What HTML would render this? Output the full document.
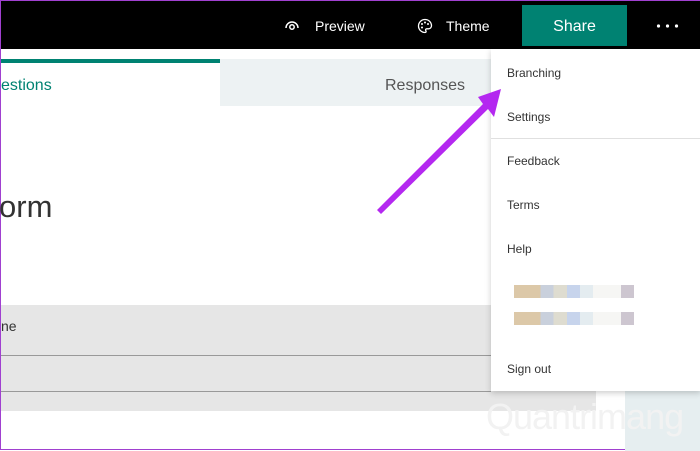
<!DOCTYPE html>
<html><head><meta charset="utf-8"><style>
*{margin:0;padding:0;box-sizing:border-box}
body{width:700px;height:450px;overflow:hidden;background:#fff;font-family:"Liberation Sans",sans-serif;position:relative;border:1px solid #a040d0}
.a{position:absolute}
.hdr{left:0;top:0;width:700px;height:48px;background:#000}
.ht{color:#fff;font-size:14px;top:17px}
.mi{font-size:12px;color:#333;left:506px}
</style></head><body>
<div class="a hdr"></div>
<svg class="a" style="left:283px;top:17px" width="16" height="14" viewBox="0 0 16 14"><path d="M2 10 A6 6 0 0 1 14 10" fill="none" stroke="#fff" stroke-width="1.5"/><circle cx="8" cy="9" r="2.2" fill="none" stroke="#fff" stroke-width="1.5"/></svg>
<div class="a ht" style="left:314px">Preview</div>
<svg class="a" style="left:416px;top:17px" width="16" height="16" viewBox="0 0 16 16"><path d="M8 1.5a6.5 6.5 0 1 0 0 13c1.2 0 1.4-1 .8-1.8-.6-.8-.1-1.9 1-1.9h1.7a3 3 0 0 0 3-3C14.5 4.2 11.6 1.5 8 1.5z" fill="none" stroke="#fff" stroke-width="1.3"/><circle cx="5" cy="6" r="1" fill="#fff"/><circle cx="8" cy="4.5" r="1" fill="#fff"/><circle cx="11" cy="6" r="1" fill="#fff"/><circle cx="5" cy="9.5" r="1" fill="#fff"/></svg>
<div class="a ht" style="left:445px">Theme</div>
<div class="a" style="left:521px;top:4px;width:105px;height:41px;background:#008272;color:#fff;font-size:16px;text-align:center;line-height:43px">Share</div>
<svg class="a" style="left:655px;top:22px" width="24" height="6"><circle cx="2.5" cy="3" r="1.6" fill="#fff"/><circle cx="11.5" cy="3" r="1.6" fill="#fff"/><circle cx="20.5" cy="3" r="1.6" fill="#fff"/></svg>

<div class="a" style="left:0;top:58px;width:490px;height:47px;background:#edf2f3"></div>
<div class="a" style="left:0;top:58px;width:219px;height:47px;background:#fff;border-top:4px solid #008272"></div>
<div class="a" style="left:0;top:76px;font-size:16px;color:#008272">estions</div>
<div class="a" style="left:384px;top:76px;font-size:16px;color:#555">Responses</div>
<div class="a" style="left:-2px;top:188px;font-size:31px;color:#333">orm</div>

<div class="a" style="left:0;top:304px;width:595px;height:106px;background:#e6e6e6"></div>
<div class="a" style="left:0;top:354px;width:490px;height:1px;background:#999"></div>
<div class="a" style="left:0;top:390px;width:490px;height:1px;background:#999"></div>
<div class="a" style="left:0;top:317px;font-size:14px;color:#333">ne</div>
<div class="a" style="left:624px;top:390px;width:76px;height:60px;background:#e6eef0"></div>
<div class="a" style="left:485px;top:395px;font-size:36px;color:#f2f2f2;letter-spacing:-1px">Quantrimang</div>

<div class="a" style="left:490px;top:48px;width:210px;height:342px;background:#fff;box-shadow:0 2px 6px rgba(0,0,0,.2)"></div>
<div class="a mi" style="top:65px">Branching</div>
<div class="a mi" style="top:109px">Settings</div>
<div class="a" style="left:490px;top:137px;width:210px;height:1px;background:#e0e0e0"></div>
<div class="a mi" style="top:153px">Feedback</div>
<div class="a mi" style="top:197px">Terms</div>
<div class="a mi" style="top:241px">Help</div>
<div class="a" style="left:513px;top:284px;width:120px;height:13px;background:linear-gradient(90deg,#dcc8a8 0 22%,#c9d0dc 22% 33%,#dedcd0 33% 44%,#c7d4ec 44% 55%,#e4ecf0 55% 66%,#f6f6f4 66% 89%,#cdc6d0 89%)"></div>
<div class="a" style="left:513px;top:311px;width:120px;height:13px;background:linear-gradient(90deg,#dcc8a8 0 22%,#c9d0dc 22% 33%,#dedcd0 33% 44%,#c7d4ec 44% 55%,#e4ecf0 55% 66%,#f6f6f4 66% 89%,#cdc6d0 89%)"></div>
<div class="a mi" style="top:361px">Sign out</div>

<svg class="a" style="left:0;top:0" width="700" height="450"><polygon points="500,88 493,116 487,108 380,213 376,209 482,103 477,96" fill="#b428f0"/></svg>
</body></html>
